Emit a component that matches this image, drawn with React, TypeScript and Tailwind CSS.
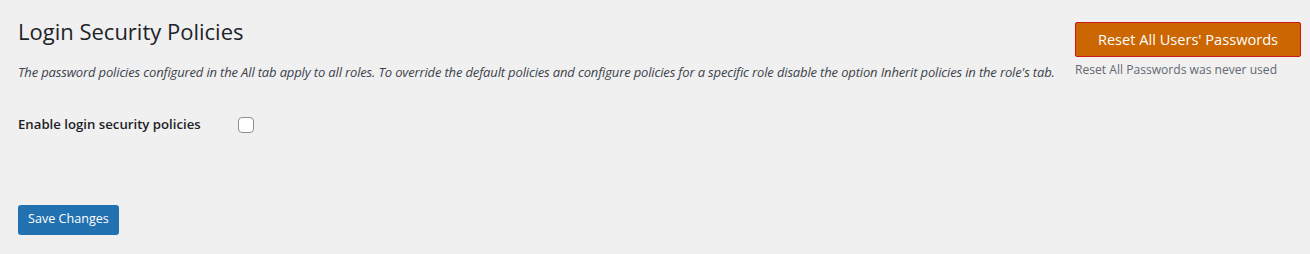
const font = "font-['Segoe_UI','Open_Sans','Noto_Sans',sans-serif]";

export default function App() {
  return (
    <div className={`min-h-[254px] w-[1310px] bg-[#f0f0f1] text-[#1d2327] ${font}`}>
      <div className="flex items-start justify-between pl-[18px] pr-[9px]">
        <div className="pt-[17px]">
          <h2 className="text-[22px] leading-[29px] font-normal">Login Security Policies</h2>
          <p className="mt-[17px] text-[13px] leading-[18px] italic text-[#3c434a] tracking-[-0.15px]">
            The password policies configured in the All tab apply to all roles. To override the default policies and configure policies for a specific role disable the option Inherit policies in the role's tab.
          </p>
        </div>
        <div className="pt-[22px]">
          <button className="h-[35px] w-[226px] rounded-[2px] border border-[#cc1818] bg-[#cc6600] text-[14.6px] text-white">
            Reset All Users' Passwords
          </button>
          <p className="mt-[4px] text-[12.1px] leading-[18px] text-[#646970]">Reset All Passwords was never used</p>
        </div>
      </div>

      <div className="mt-[34px] flex items-center pl-[18px]">
        <span className="w-[220px] text-[13.2px] font-semibold">Enable login security policies</span>
        <input type="checkbox" className="h-4 w-4 appearance-none rounded-[4px] border border-[#8c8f94] bg-white" />
      </div>

      <div className="mt-[70px] pl-[18px]">
        <button className="h-[30px] rounded-[3px] bg-[#2271b1] px-[10px] text-[12.6px] text-white">Save Changes</button>
      </div>
    </div>
  );
}
